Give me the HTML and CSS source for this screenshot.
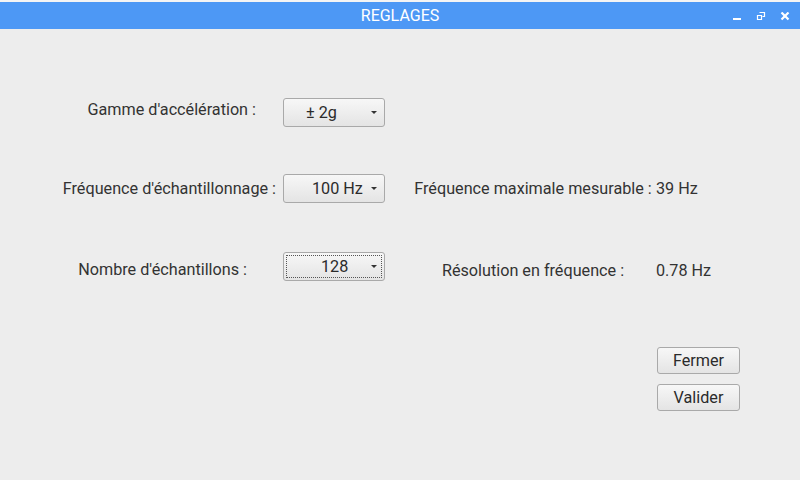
FILE: index.html
```html
<!DOCTYPE html>
<html lang="fr">
<head>
<meta charset="utf-8">
<title>REGLAGES</title>
<link rel="stylesheet" href="styles.css">
</head>
<body>
<div class="window">
  <header class="titlebar">
    <span class="title">REGLAGES</span>
    <div class="wm-buttons">
      <svg class="wm-icon" width="10" height="10" viewBox="0 0 10 10"><rect x="1" y="6" width="8" height="2" fill="#fff"/></svg>
      <svg class="wm-icon" width="10" height="10" viewBox="0 0 10 10"><path d="M3.5 0.5h5v4h-2M1.5 3.5h4v4h-4z" fill="none" stroke="#fff" stroke-width="1.2"/></svg>
      <svg class="wm-icon" width="10" height="10" viewBox="0 0 10 10"><path d="M1.5 0.5l7 7M8.5 0.5l-7 7" stroke="#fff" stroke-width="2.2"/></svg>
    </div>
  </header>
  <main class="content">
    <div class="row row-1">
      <label class="label label-1">Gamme d'accélération :</label>
      <div class="combo combo-1"><span class="combo-text">± 2g</span><span class="arrow"></span></div>
      <div class="info"></div>
    </div>
    <div class="row row-2">
      <label class="label label-2">Fréquence d'échantillonnage :</label>
      <div class="combo combo-2"><span class="combo-text">100 Hz</span><span class="arrow"></span></div>
      <div class="info"><span class="info-label">Fréquence maximale mesurable :</span><span class="info-value">39 Hz</span></div>
    </div>
    <div class="row row-3">
      <label class="label label-3">Nombre d'échantillons :</label>
      <div class="combo combo-3 focused"><span class="combo-text">128</span><span class="arrow"></span></div>
      <div class="info"><span class="info-label">Résolution en fréquence :</span><span class="info-value">0.78 Hz</span></div>
    </div>
    <div class="actions">
      <button class="btn">Fermer</button>
      <button class="btn">Valider</button>
    </div>
  </main>
</div>
</body>
</html>
```

FILE: styles.css
```css
* { box-sizing: border-box; }
html, body {
  margin: 0;
  padding: 0;
  width: 800px;
  height: 480px;
  background: #ededed;
  font-family: Roboto, "Liberation Sans", sans-serif;
  font-size: 16.2px;
  color: #333333;
  overflow: hidden;
}
.window {
  display: flex;
  flex-direction: column;
  height: 480px;
  border-top: 2px solid #f4f4f4;
}
.titlebar {
  height: 27px;
  background: #4d98f5;
  display: flex;
  align-items: center;
  justify-content: center;
  position: relative;
}
.title {
  color: #ffffff;
  font-size: 16px;
  line-height: 1;
}
.wm-buttons {
  position: absolute;
  right: 10px;
  top: 10px;
  display: flex;
  gap: 14px;
}
.wm-icon { display: block; }
.content {
  flex: 1;
  padding-top: 69px;
  display: flex;
  flex-direction: column;
}
.row {
  display: grid;
  grid-template-columns: 283px 102px 1fr;
  align-items: center;
  height: 29px;
}
.row-2 { margin-top: 47px; }
.row-3 { margin-top: 49px; }
.label {
  text-align: right;
  white-space: nowrap;
}
.label-1 { padding-right: 27px; margin-bottom: 6px; }
.label-2 { padding-right: 7px; }
.label-3 { padding-right: 36px; margin-top: 6px; }
.combo {
  height: 29px;
  border: 1px solid #a9a9a9;
  border-radius: 3px;
  background: linear-gradient(#f7f7f7, #e4e4e4);
  display: flex;
  align-items: center;
  padding: 0 7px 0 0;
  position: relative;
}
.combo.focused::after {
  content: "";
  position: absolute;
  inset: 2px;
  border: 1px dotted #555;
  border-radius: 1px;
}
.combo-text {
  flex: 1;
  text-align: left;
  color: #2b2b2b;
  white-space: nowrap;
}
.combo-1 .combo-text { padding-left: 22px; }
.combo-2 .combo-text { padding-left: 28px; }
.combo-3 .combo-text { padding-left: 37px; }
.arrow {
  width: 0;
  height: 0;
  border-left: 3px solid transparent;
  border-right: 3px solid transparent;
  border-top: 3px solid #333;
}
.info {
  display: grid;
  grid-template-columns: 246px auto;
  padding-left: 25px;
}
.row-3 .info { margin-top: 8px; }
.info-label {
  text-align: center;
  white-space: nowrap;
}
.info-value { white-space: nowrap; }
.actions {
  margin-top: 66px;
  margin-left: 657px;
  display: flex;
  flex-direction: column;
  gap: 10px;
  width: 83px;
}
.btn {
  height: 27px;
  font-family: Roboto, "Liberation Sans", sans-serif;
  font-size: 16.2px;
  color: #2b2b2b;
  border: 1px solid #a9a9a9;
  border-radius: 3px;
  background: linear-gradient(#f7f7f7, #e4e4e4);
  padding: 0;
}
```
